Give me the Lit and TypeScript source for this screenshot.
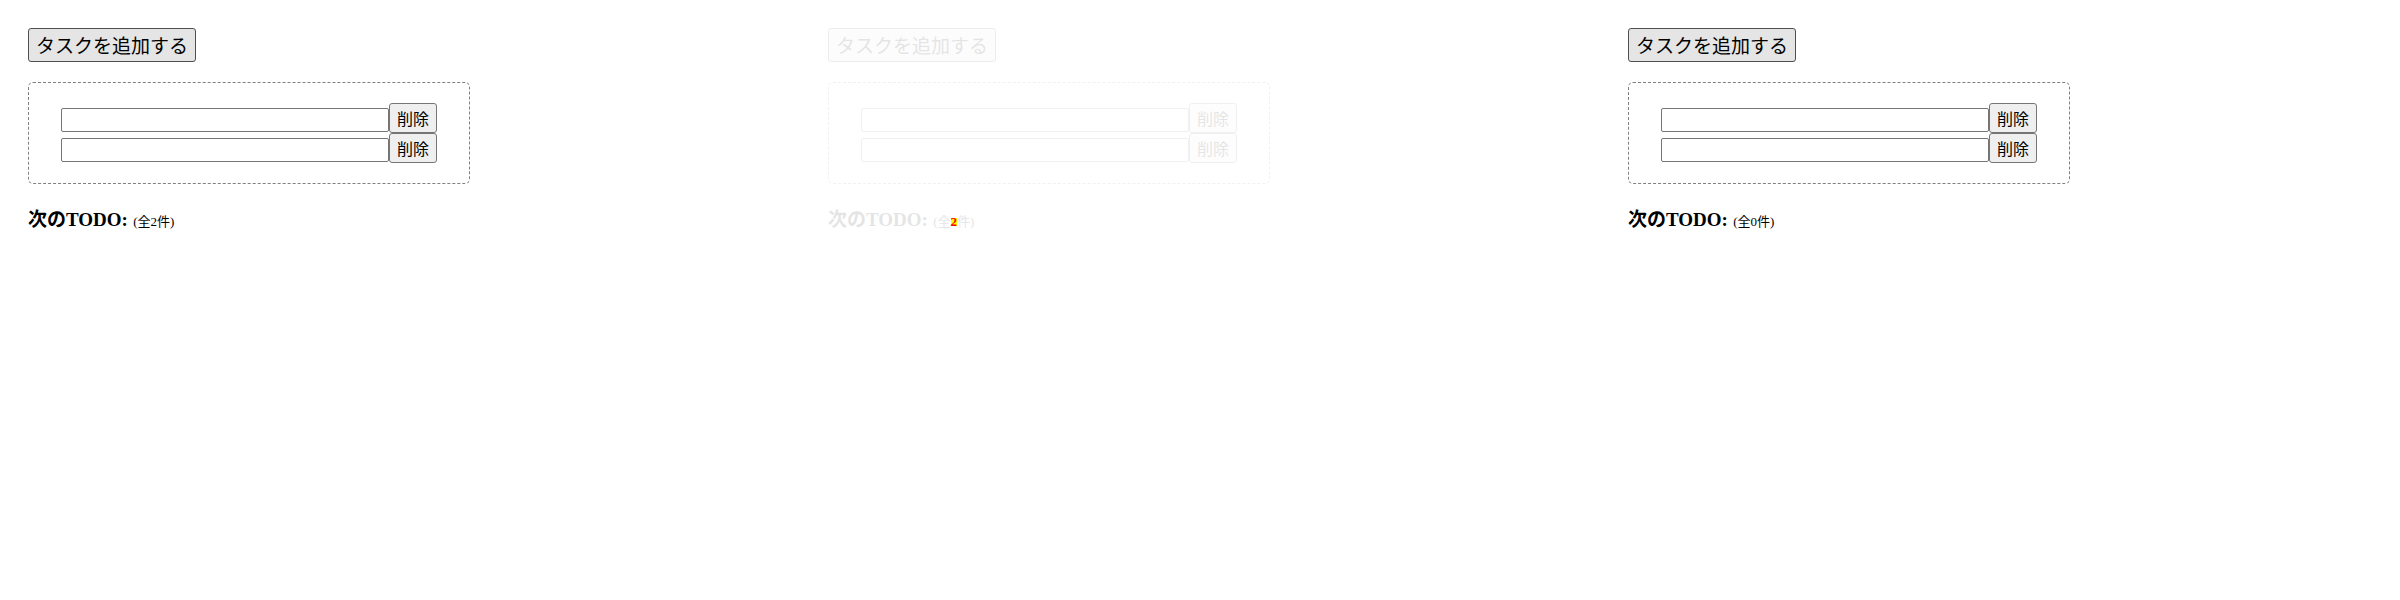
import { LitElement, html, css } from "lit";
import { customElement, property } from "lit/decorators.js";

@customElement("todo-panel")
class TodoPanel extends LitElement {
  @property({ type: String }) count = "0";
  @property({ type: Boolean, reflect: true }) faded = false;
  static styles = css`
    :host { display: block; padding: 28px; font-family: "Liberation Serif", "Noto Sans CJK JP", serif; color: #000; }
    button, input { box-sizing: border-box; margin: 0; color: #000; font-family: "Liberation Sans", "Noto Sans CJK JP", sans-serif; }
    button { display: block; padding: 0; white-space: nowrap; border: 1px solid #767676; border-radius: 3px; background: #efefef; }
    .add { width: 168px; height: 34px; padding-bottom: 2px; font-size: 19px; border-color: #4f4f4f; background: #e5e5e5; }
    .box { box-sizing: border-box; width: 442px; height: 102px; margin-top: 20px; padding: 20px 32px; border: 1px dashed #808080; border-radius: 5px; }
    .row { display: flex; height: 30px; }
    .field { width: 328px; height: 24px; margin-top: 5px; padding: 1px 2px; border: 1px solid #767676; border-radius: 2px; background: #fff; }
    .remove { width: 48px; height: 30px; font-size: 16px; }
    .next { display: flex; align-items: baseline; gap: 5.25px; margin-top: 22px; line-height: 28px; }
    .title { font-size: 19px; font-weight: bold; }
    .total { font-size: 13px; }
    .count { display: inline-block; line-height: 15px; }
    :host([faded]) .add, :host([faded]) .box, :host([faded]) .title { opacity: 0.1; }
    :host([faded]) .total { color: #e6e6e6; }
    :host([faded]) .count { color: #f00; font-weight: bold; background: linear-gradient(#ff0, #ff0) center 4px / 6px 8px no-repeat; }
  `;
  render() {
    const row = html`<div class="row"><input class="field" /><button class="remove">削除</button></div>`;
    return html`
      <button class="add">タスクを追加する</button>
      <div class="box">${row}${row}</div>
      <div class="next"><span class="title">次のTODO:</span><span class="total">(全<span class="count">${this.count}</span>件)</span></div>`;
  }
}

@customElement("app-root")
class AppRoot extends LitElement {
  static styles = css`
    :host { display: grid; grid-template-columns: repeat(3, 800px); height: 600px; background: #fff; }
  `;
  render() {
    return html`
      <todo-panel .count=${"2"}></todo-panel>
      <todo-panel .count=${"2"} faded></todo-panel>
      <todo-panel .count=${"0"}></todo-panel>`;
  }
}
